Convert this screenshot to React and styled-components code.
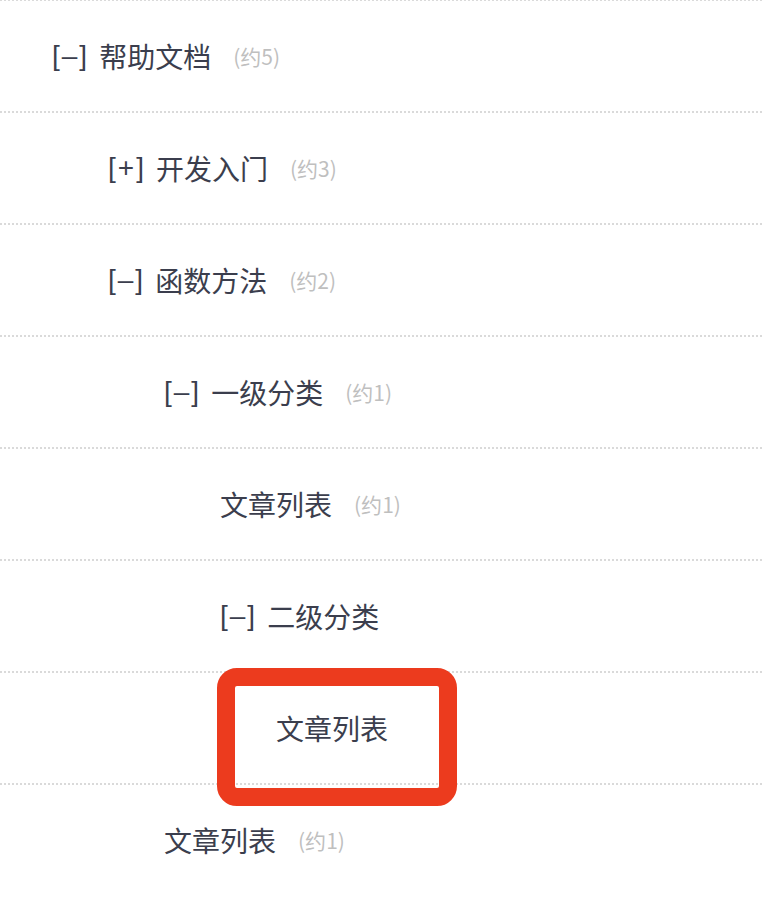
import React from 'react'
import styled, { createGlobalStyle } from 'styled-components'

const GlobalStyle = createGlobalStyle`
  html, body {
    margin: 0;
    padding: 0;
    background: #fff;
  }
  body {
    font-family: "Noto Sans CJK SC", "Noto Sans", sans-serif;
  }
`

const Tree = styled.ul`
  position: relative;
  list-style: none;
  margin: -1px 0 0;
  padding: 0;
  border-top: 2px dotted #dadada;
`

const Row = styled.li`
  display: flex;
  align-items: center;
  height: 110px;
  padding-left: ${(props) => 52 + props.level * 56}px;
  border-bottom: 2px dotted #dadada;
  &:last-of-type {
    border-bottom: none;
  }
`

const Toggle = styled.span`
  font-family: "Liberation Sans", "Noto Sans CJK SC", sans-serif;
  font-size: 28px;
  color: #3b3e4d;
  letter-spacing: 2px;
  margin-right: 10px;
`

const Label = styled.span`
  font-size: 28px;
  color: #3b3e4d;
`

const Count = styled.span`
  margin-left: 22px;
  font-size: 21px;
  color: #bfbfbf;
`

const Highlight = styled.div`
  position: absolute;
  left: 217px;
  top: 667px;
  width: 240px;
  height: 138px;
  box-sizing: border-box;
  border: 18px solid #ec3b1e;
  border-radius: 20px;
  pointer-events: none;
`

const items = [
  { level: 0, toggle: '[–]', name: '帮助文档', count: 5 },
  { level: 1, toggle: '[+]', name: '开发入门', count: 3 },
  { level: 1, toggle: '[–]', name: '函数方法', count: 2 },
  { level: 2, toggle: '[–]', name: '一级分类', count: 1 },
  { level: 3, name: '文章列表', count: 1 },
  { level: 3, toggle: '[–]', name: '二级分类' },
  { level: 4, name: '文章列表' },
  { level: 2, name: '文章列表', count: 1 },
]

const App = () => {
  return (
    <>
      <GlobalStyle />
      <Tree>
        {items.map((item, i) => (
          <Row key={i} level={item.level}>
            {item.toggle && <Toggle>{item.toggle}</Toggle>}
            <Label>{item.name}</Label>
            {item.count && <Count>(约{item.count})</Count>}
          </Row>
        ))}
        <Highlight />
      </Tree>
    </>
  )
}

export default App
